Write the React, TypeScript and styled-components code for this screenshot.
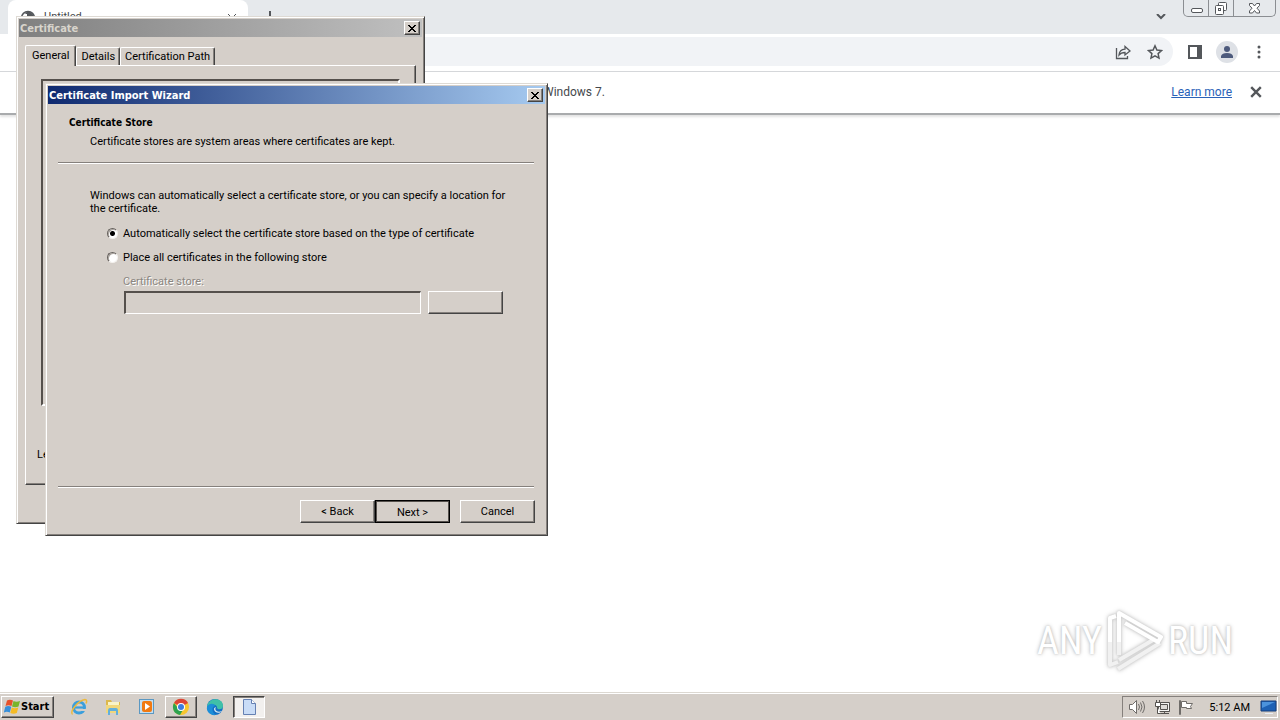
import React from "react";
import styled, { createGlobalStyle, css } from "styled-components";

const FACE = "#d5cfc9";

const Global = createGlobalStyle`
  * { box-sizing: border-box; }
  body { margin: 0; background: #fff; overflow: hidden; }
  button, input { font: inherit; color: inherit; }
`;

const Desktop = styled.div`
  position: relative;
  display: flex;
  flex-direction: column;
  height: 100vh;
  overflow: hidden;
  font: 11px/13px Roboto, "Liberation Sans", sans-serif;
  color: #000;
`;

/* ---- browser ---- */
const Browser = styled.section`
  flex: 1;
  display: flex;
  flex-direction: column;
  background: #fff;
`;
const TabStrip = styled.header`
  display: flex;
  height: 34px;
  padding: 0 4px 0 8px;
  background: #e6e9ec;
`;
const BrowserTab = styled.div`
  display: flex;
  gap: 8px;
  width: 240px;
  height: 34px;
  padding: 10px 11px 0 12px;
  border-radius: 8px 8px 0 0;
  background: #fff;
  color: #45484c;
  font-size: 11px;
  line-height: 14px;
`;
const TabTitle = styled.span`flex: 1;`;
const IconButton = styled.button<{ $w?: number; $h?: number; $round?: boolean }>`
  display: flex;
  align-items: center;
  justify-content: center;
  width: ${(p) => p.$w ?? 16}px;
  height: ${(p) => p.$h ?? 16}px;
  padding: 0;
  border: 0;
  border-radius: ${(p) => (p.$round ? "50%" : "0")};
  background: ${(p) => (p.$round ? "#dee1e6" : "transparent")};
  color: #54575b;
`;
const NewTab = styled(IconButton)`margin: 9px 0 0 14px;`;
const TabSearch = styled(IconButton)`margin: 9px 14px 0 auto;`;
const WindowControls = styled.div`
  display: flex;
  height: 17px;
  border: 1px solid #8b8e92;
  border-top: 0;
  border-radius: 0 0 5px 5px;
  overflow: hidden;
`;
const WindowControl = styled(IconButton)`
  & + & { border-left: 1px solid #8b8e92; }
`;
const Toolbar = styled.div`
  display: flex;
  align-items: center;
  height: 38px;
  padding: 0 13px 2px 16px;
  border-bottom: 1px solid #d5d7da;
`;
const AddressBar = styled.div`
  flex: 1;
  display: flex;
  justify-content: flex-end;
  align-items: center;
  gap: 16px;
  height: 29px;
  margin-right: 14px;
  padding-right: 10px;
  border-radius: 15px;
  background: #f1f3f6;
`;
const ToolbarActions = styled.div`
  display: flex;
  align-items: center;
  gap: 13px;
`;
const InfoBar = styled.div`
  display: flex;
  align-items: center;
  height: 43px;
  padding: 0 16px 2px 543px;
  border-bottom: 2px solid #a9abad;
  box-shadow: 0 2px 2px #e4e4e4;
  color: #45484c;
  font-size: 12px;
  line-height: 16px;
`;
const LearnMore = styled.a`
  margin: 0 16px 0 auto;
  color: #2a62b8;
`;

/* ---- classic windows ---- */
const raised = css`
  border: 1px solid;
  border-color: #fff #444 #444 #fff;
  box-shadow: inset -1px -1px #85807c;
`;
const Window = styled.section<{ $x: number; $y: number; $w: number; $h: number }>`
  position: absolute;
  left: ${(p) => p.$x}px;
  top: ${(p) => p.$y}px;
  display: flex;
  flex-direction: column;
  width: ${(p) => p.$w}px;
  height: ${(p) => p.$h}px;
  padding: 2px;
  border: 1px solid;
  border-color: #dedad4 #444 #444 #dedad4;
  box-shadow: inset 1px 1px #fff, inset -1px -1px #85807c;
  background: ${FACE};
`;
const TitleBar = styled.header<{ $active?: boolean }>`
  display: flex;
  align-items: center;
  justify-content: space-between;
  height: 18px;
  padding: 0 2px 0 1px;
  background: ${(p) =>
    p.$active ? "linear-gradient(90deg, #0f2a70, #a6caf0)" : "linear-gradient(90deg, #808080, #c0c0c0)"};
  color: ${(p) => (p.$active ? "#fff" : "#d8d4cc")};
`;
const Title = styled.h1`
  margin: 0;
  font: bold 11px/13px "DejaVu Sans Condensed", "DejaVu Sans", sans-serif;
`;
const CloseButton = styled.button`
  ${raised}
  display: flex;
  align-items: center;
  justify-content: center;
  width: 16px;
  height: 14px;
  padding: 0;
  background: ${FACE};
  color: #000;
`;
const Tabs = styled.div`
  display: flex;
  align-items: flex-end;
  height: 28px;
  padding: 0 6px;
`;
const PageTab = styled.button<{ $selected?: boolean }>`
  ${raised}
  height: ${(p) => (p.$selected ? 21 : 18)}px;
  padding: 0 4px;
  border-bottom: 0;
  border-radius: 2px 2px 0 0;
  background: ${FACE};
  box-shadow: inset -1px 0 #85807c;
  white-space: nowrap;
  ${(p) => p.$selected && css`padding: 0 6px 2px; margin-bottom: -1px; z-index: 1;`}
`;
const TabPage = styled.div`
  ${raised}
  flex: 1;
  display: flex;
  flex-direction: column;
  margin: 0 6px 36px;
  padding: 13px 15px 23px 11px;
`;
const CertificateBox = styled.div`
  height: 327px;
  margin-left: 4px;
  border: 2px solid;
  border-color: #55504c #fff #fff #55504c;
`;
const TabNote = styled.p`margin: auto 0 0;`;

const WizardHead = styled.div`
  height: 58px;
  padding: 12px 21px 0;
`;
const Heading = styled.h2`
  margin: 0 0 6px;
  font: bold 10px/13px "DejaVu Sans Condensed", "DejaVu Sans", sans-serif;
`;
const Text = styled.p<{ $indent?: boolean }>`
  margin: 0;
  padding-left: ${(p) => (p.$indent ? 21 : 0)}px;
`;
const Rule = styled.hr`
  width: 476px;
  height: 2px;
  margin: 0 10px;
  border: 0;
  border-top: 1px solid #85807c;
  border-bottom: 1px solid #fff;
`;
const WizardBody = styled.form`
  flex: 1;
  padding: 25px 30px 0 42px;
`;
const Option = styled.label`
  display: flex;
  align-items: center;
  gap: 5px;
  height: 24px;
  padding-left: 17px;
`;
const Options = styled.div`padding-top: 6px;`;
const Radio = styled.input`
  appearance: none;
  width: 11px;
  height: 11px;
  margin: 0;
  border: 1px solid;
  border-color: #66615d #f4f2ef #f4f2ef #66615d;
  border-radius: 50%;
  background: #fff;
  box-shadow: inset 1px 1px #aaa49e;
  &:checked { background: radial-gradient(circle, #000 2px, #fff 3px); }
`;
const StoreLabel = styled.label`
  display: block;
  padding: 6px 0 3px 33px;
  color: #8b8681;
  text-shadow: 1px 1px #fff;
`;
const StoreRow = styled.div`
  display: flex;
  gap: 7px;
  padding-left: 34px;
`;
const StoreInput = styled.input`
  width: 297px;
  height: 23px;
  border: 2px solid;
  border-width: 2px 1px 1px 2px;
  border-color: #55504c #fff #fff #55504c;
  background: ${FACE};
`;
const PushButton = styled.button<{ $default?: boolean }>`
  ${raised}
  width: 75px;
  height: 23px;
  padding: 0;
  background: ${FACE};
  ${(p) => p.$default && css`
    padding-top: 1px;
    border-color: #000;
    box-shadow: inset 1px 1px #55504c, inset -1px -1px #55504c;
  `}
`;
const WizardFooter = styled.footer`
  display: flex;
  justify-content: flex-end;
  padding: 12px 10px 10px;
`;
const CancelButton = styled(PushButton)`margin-left: 10px;`;

/* ---- watermark ---- */
const Watermark = styled.div`
  position: absolute;
  right: 47px;
  bottom: 48px;
  display: flex;
  align-items: center;
  gap: 4px;
  color: #fff;
  font: 38px/62px "Roboto Condensed", "Liberation Sans Narrow", "Liberation Sans", sans-serif;
  text-shadow: 0 0 4px #bbb, 0 0 2px #ccc;
`;
const LogoDrawing = styled.svg`
  overflow: visible;
  filter: drop-shadow(0 0 1px #ccc) drop-shadow(0 0 2px #ccc);
`;

/* ---- taskbar ---- */
const Taskbar = styled.footer`
  z-index: 1;
  display: flex;
  align-items: center;
  height: 28px;
  padding: 1px 2px 0 1px;
  border-top: 1px solid #dcd8d1;
  box-shadow: inset 0 1px #fff;
  background: ${FACE};
`;
const StartButton = styled.button`
  ${raised}
  display: flex;
  align-items: center;
  gap: 1px;
  width: 53px;
  height: 22px;
  padding: 0 2px;
  background: ${FACE};
  font: bold 11px/14px "DejaVu Sans Condensed", "DejaVu Sans", sans-serif;
`;
const TaskList = styled.nav`
  display: flex;
  gap: 2px;
  margin-left: 9px;
`;
const Task = styled.button<{ $state?: "open" | "active" }>`
  display: flex;
  align-items: center;
  justify-content: center;
  width: 32px;
  height: 22px;
  padding: 0;
  border: 1px solid transparent;
  background: ${(p) => (p.$state === "active" ? "#f2f0ee" : "transparent")};
  ${(p) => p.$state === "open" && raised}
  ${(p) => p.$state === "active" && css`
    border-color: #444 #fff #fff #444;
    box-shadow: inset 1px 1px #85807c;
  `}
`;
const Tray = styled.div`
  display: flex;
  align-items: center;
  gap: 8px;
  height: 22px;
  margin-left: auto;
  padding: 0 0 0 5px;
  border: 1px solid;
  border-color: #85807c #fff #fff #85807c;
`;
const Clock = styled.time`padding: 0 2px 0 7px;`;

const Cross = ({ size = 12, w = 2 }: { size?: number; w?: number }) => (
  <svg width={size} height={size} viewBox="0 0 10 10" stroke="currentColor" strokeWidth={w} fill="none">
    <path d="M1 1l8 8M9 1L1 9" />
  </svg>
);
const ClassicCross = () => (
  <svg width="8" height="7" viewBox="0 0 8 7" fill="currentColor" shapeRendering="crispEdges">
    <path d="M0 0h2v1h1v1h2V1h1V0h2v1H7v1H6v1H5v1h1v1h1v1h1v1H6V6H5V5H3v1H2v1H0V6h1V5h1V4h1V3H2V2H1V1H0z" />
  </svg>
);

const Logo = () => (
  <LogoDrawing width="58" height="62" viewBox="0 0 58 62" fill="none" strokeLinejoin="round">
    <g stroke="#f1f1f1" strokeWidth="4">
      <path d="M4 30V55l8-3M13 30V45M12 59l42-26M13 50l34-20" />
    </g>
    <g stroke="#fff" strokeWidth="4">
      <path d="M4 32V8l6-2M13 32V3l42 24-3 5-33-19" />
    </g>
  </LogoDrawing>
);

const StartFlag = () => (
  <svg width="16" height="16" viewBox="0 0 16 16">
    <path d="M3 1.500c2-1.200 4-1 6 0L7.500 7c-2-1-4-1-6 0z" fill="#e6512b" />
    <path d="M9.500 2c2 1 4 1 6.500 0l-1.500 5.500c-2 1-4.500 1-6.500 0z" fill="#78b52c" />
    <path d="M1.300 7.800c2-1 4-1 6 0L5.800 13.500c-2-1-4-1-6 0z" fill="#378fda" />
    <path d="M7.800 8.500c2 1 4 1 6.500 0l-1.500 5.500c-2 1-4.500 1-6.500 0z" fill="#f5bb25" />
  </svg>
);
const Explorer = () => (
  <svg width="18" height="18" viewBox="0 0 18 18" fill="none">
    <circle cx="9" cy="9.500" r="5.500" stroke="#3b9fdc" strokeWidth="3" />
    <path d="M4 9.500h11" stroke="#3b9fdc" strokeWidth="2.200" />
    <path d="M11 12h6" stroke={FACE} strokeWidth="2" />
    <path d="M2.500 16.500C-1 14 8 2.500 15 1.500c2 0 2 2 1 4" stroke="#edb93c" strokeWidth="1.500" />
  </svg>
);
const Folder = () => (
  <svg width="18" height="18" viewBox="0 0 18 18">
    <path d="M2 2h5l1 2h8v11H2z" fill="#dcb84c" />
    <path d="M4 4h11v5H4z" fill="#f9f3c8" />
    <path d="M2 7h14v8H2z" fill="#f1d77c" />
    <path d="M4 17v-4q0-3 2-3h6q2 0 2 3v4h-2v-4H6v4z" fill="#62afdc" />
  </svg>
);
const Player = () => (
  <svg width="18" height="18" viewBox="0 0 18 18">
    <rect x="1.500" y="1.500" width="14" height="14" fill="#c4dff1" stroke="#5b98c2" />
    <rect x="4" y="3" width="10" height="11" rx="2" fill="#f17a12" />
    <path d="M7 5l5 3.500L7 12z" fill="#fff" />
  </svg>
);
const Chrome = () => (
  <svg width="18" height="18" viewBox="0 0 18 18">
    <circle cx="9" cy="9" r="8" fill="#f7c62f" />
    <path d="M9 9L2 5a8 8 0 0 1 14 0z" fill="#dc4437" />
    <path d="M2 5a8 8 0 0 0 6 12l4-7-3 2-3-2z" fill="#2ea24f" />
    <circle cx="9" cy="9" r="4" fill="#fff" />
    <circle cx="9" cy="9" r="3" fill="#3c7ce0" />
  </svg>
);
const Edge = () => (
  <svg width="18" height="18" viewBox="0 0 18 18">
    <circle cx="9" cy="9" r="8" fill="#1470c4" />
    <path d="M1 9C2-1 17-1 17 8c0 4-5 4-6 2 1-4-7-5-10-1z" fill="#3fc0a8" />
    <path d="M1 9c2-4 7-4 8-1-4 1-3 7 1 9C4 18 0 13 1 9z" fill="#1c8ed8" />
    <path d="M10 9c-2 3 1 6 6 4-2 3-8 2-8-2 0-1 1-2 2-2z" fill="#dcebf0" />
  </svg>
);
const Document = () => (
  <svg width="18" height="18" viewBox="0 0 18 18">
    <path d="M3.500 1.500h8l4 4v11h-12z" fill="#c9dcf6" stroke="#6580b2" />
    <path d="M11.500 1.500v4h4" fill="#fff" stroke="#6580b2" />
  </svg>
);
const Speaker = () => (
  <svg width="18" height="16" viewBox="0 0 18 16" fill="none" stroke="#6f6c69">
    <path d="M1.500 5.500h3l4-4v13l-4-4h-3z" fill="#fff" />
    <path d="M10.500 5q2 3 0 6M12.500 3.500q3 4.500 0 9M14.500 2q4 6 0 12" />
  </svg>
);
const Network = () => (
  <svg width="16" height="16" viewBox="0 0 16 16" fill="none" stroke="#55524f">
    <path d="M4.500 3.500h11v9h-11z" fill="#f4f3f1" />
    <path d="M6.500 5.500h7v5h-7z" fill="#dedbd7" />
    <path d="M6 14.500h9M10.500 13v1" />
    <path d="M1.500 3.500h5v4h-5zM2.500 1v2M5.500 1v2M3.500 8v6.500h3" fill="#fff" />
  </svg>
);
const Flag = () => (
  <svg width="16" height="16" viewBox="0 0 16 16" fill="#fff" stroke="#6f6c69">
    <path d="M1.500 15.500v-14h1v14z" />
    <path d="M3.500 2.500h5v2h6l-2 3 1 2h-5v-1h-5z" />
  </svg>
);
const ShowDesktop = () => (
  <svg width="17" height="16" viewBox="0 0 17 16">
    <path d="M1 2h15v10H1z" fill="#1e61b4" stroke="#163f7a" />
    <path d="M2 3h13L2 9z" fill="#4c93dc" />
    <path d="M5 15h8v-1H5z" fill="#e9eef5" />
  </svg>
);

export default function App() {
  return (
    <Desktop>
      <Global />
      <Browser>
        <TabStrip>
          <BrowserTab>
            <svg width="16" height="16" viewBox="0 0 16 16">
              <circle cx="8" cy="8" r="6.500" fill="#fff" stroke="#54575b" strokeWidth="1.500" />
              <path d="M7 1.500c4 0 7 3 7.500 6.500H12L10 6H7V4H5zM2 8h4l3 3v3.500C5 15 2 12 2 8z" fill="#54575b" />
            </svg>
            <TabTitle>Untitled</TabTitle>
            <IconButton $w={10} aria-label="Close tab"><Cross w={1} size={10} /></IconButton>
          </BrowserTab>
          <NewTab aria-label="New tab">
            <svg width="12" height="12" stroke="currentColor" strokeWidth="2"><path d="M6 0v12M0 7h12" /></svg>
          </NewTab>
          <TabSearch aria-label="Search tabs">
            <svg width="10" height="6" stroke="currentColor" strokeWidth="2" fill="none"><path d="M1 0l4 4 4-4" /></svg>
          </TabSearch>
          <WindowControls>
            <WindowControl $w={24} aria-label="Minimize">
              <svg width="13" height="16" fill="#fff" stroke="#54575b"><rect x="1.500" y="8.500" width="11" height="4" rx="1.500" /></svg>
            </WindowControl>
            <WindowControl $w={25} aria-label="Restore">
              <svg width="14" height="16" fill="#fff" stroke="#54575b">
                <rect x="4.500" y="2.500" width="8" height="8" rx="1" />
                <rect x="1.500" y="5.500" width="8" height="9" rx="1" />
                <rect x="4.500" y="8.500" width="2" height="2" />
              </svg>
            </WindowControl>
            <WindowControl $w={42} aria-label="Close">
              <svg width="13" height="16" fill="#fff" stroke="#54575b">
                <path d="M1.500 3.500h3l2 2.500 2-2.500h3v2l-2.500 2.700 2.500 2.800v2h-3l-2-2.500-2 2.500h-3v-2L4 8.200 1.500 5.500z" />
              </svg>
            </WindowControl>
          </WindowControls>
        </TabStrip>
        <Toolbar>
          <AddressBar>
            <IconButton aria-label="Share">
              <svg width="16" height="16" fill="none" stroke="currentColor" strokeWidth="1.300">
                <path d="M1.500 4v10.500h11V12" />
                <path d="M4 11q.5-5.500 6-5.800V2.500L15 7l-5 4V8.500Q6 8.500 4 11z" />
              </svg>
            </IconButton>
            <IconButton aria-label="Bookmark">
              <svg width="16" height="16" fill="none" stroke="currentColor" strokeWidth="1.500">
                <path d="M8 1.800l1.900 4.200 4.600.5-3.400 3.100.9 4.500L8 11.800l-4 2.300.9-4.500L1.500 6.500l4.600-.5z" />
              </svg>
            </IconButton>
          </AddressBar>
          <ToolbarActions>
            <IconButton aria-label="Side panel">
              <svg width="14" height="14" fill="none" stroke="currentColor" strokeWidth="2">
                <path d="M1 1h12v12H1z" /><path d="M10 1h3v12h-3z" fill="currentColor" />
              </svg>
            </IconButton>
            <IconButton $w={22} $h={22} $round aria-label="Profile">
              <svg width="12" height="12" fill="#4d5a7c">
                <circle cx="6" cy="3" r="3" /><path d="M0 12v-2q1-3 6-3t6 3v2z" />
              </svg>
            </IconButton>
            <IconButton aria-label="Menu">
              <svg width="4" height="14" fill="currentColor">
                <circle cx="2" cy="2" r="1.500" /><circle cx="2" cy="7" r="1.500" /><circle cx="2" cy="12" r="1.500" />
              </svg>
            </IconButton>
          </ToolbarActions>
        </Toolbar>
        <InfoBar>
          <span>Windows 7.</span>
          <LearnMore href="#">Learn more</LearnMore>
          <IconButton aria-label="Dismiss"><Cross /></IconButton>
        </InfoBar>
      </Browser>

      <Window $x={16} $y={16} $w={409} $h={508}>
        <TitleBar>
          <Title>Certificate</Title>
          <CloseButton aria-label="Close"><ClassicCross /></CloseButton>
        </TitleBar>
        <Tabs>
          <PageTab $selected>General</PageTab>
          <PageTab>Details</PageTab>
          <PageTab>Certification Path</PageTab>
        </Tabs>
        <TabPage>
          <CertificateBox />
          <TabNote>Le</TabNote>
        </TabPage>
      </Window>

      <Window $x={45} $y={83} $w={503} $h={453}>
        <TitleBar $active>
          <Title>Certificate Import Wizard</Title>
          <CloseButton aria-label="Close"><ClassicCross /></CloseButton>
        </TitleBar>
        <WizardHead>
          <Heading>Certificate Store</Heading>
          <Text $indent>Certificate stores are system areas where certificates are kept.</Text>
        </WizardHead>
        <Rule />
        <WizardBody>
          <Text>
            Windows can automatically select a certificate store, or you can specify a location for
            <br />
            the certificate.
          </Text>
          <Options>
            <Option>
              <Radio type="radio" name="store" defaultChecked />
              Automatically select the certificate store based on the type of certificate
            </Option>
            <Option>
              <Radio type="radio" name="store" />
              Place all certificates in the following store
            </Option>
          </Options>
          <StoreLabel htmlFor="store-name">Certificate store:</StoreLabel>
          <StoreRow>
            <StoreInput id="store-name" disabled />
            <PushButton type="button" disabled aria-label="Browse" />
          </StoreRow>
        </WizardBody>
        <Rule />
        <WizardFooter>
          <PushButton>&lt; Back</PushButton>
          <PushButton $default>Next &gt;</PushButton>
          <CancelButton>Cancel</CancelButton>
        </WizardFooter>
      </Window>

      <Watermark>
        <span>ANY</span>
        <Logo />
        <span>RUN</span>
      </Watermark>

      <Taskbar>
        <StartButton><StartFlag />Start</StartButton>
        <TaskList>
          <Task aria-label="Internet Explorer"><Explorer /></Task>
          <Task aria-label="File Explorer"><Folder /></Task>
          <Task aria-label="Media Player"><Player /></Task>
          <Task $state="open" aria-label="Chrome"><Chrome /></Task>
          <Task aria-label="Edge"><Edge /></Task>
          <Task $state="active" aria-label="Certificate"><Document /></Task>
        </TaskList>
        <Tray>
          <Speaker />
          <Network />
          <Flag />
          <Clock>5:12 AM</Clock>
          <ShowDesktop />
        </Tray>
      </Taskbar>
    </Desktop>
  );
}
